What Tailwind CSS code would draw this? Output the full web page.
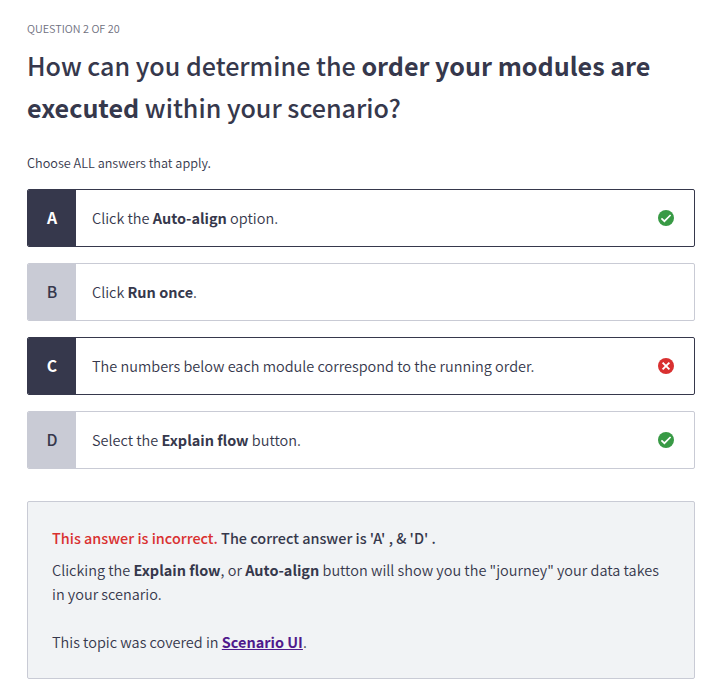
<!DOCTYPE html>
<html lang="en">
<head>
<meta charset="utf-8">
<title>Quiz</title>
<script src="https://cdn.jsdelivr.net/npm/@tailwindcss/browser@4"></script>
</head>
<body class="bg-white font-['Source_Sans_Pro','Noto_Sans_CJK_SC',sans-serif] font-[350] text-[#36384c]">
<main class="pl-[27px] pr-[19px] pt-[19px]">
  <p class="h-5 leading-[18px] text-[10.85px] text-[#6f7080] whitespace-nowrap"><span>QUESTION 2 OF 20</span></p>
  <h1 class="mt-[5px] text-[25.1px] leading-[42px] font-medium whitespace-nowrap"><span>How can you determine the </span><b class="font-bold">order your modules are</b><br><b class="font-bold">executed</b><span> within your scenario?</span></h1>
  <p class="mt-[25px] h-5 leading-5 text-[12.68px] whitespace-nowrap"><span>Choose ALL answers that apply.</span></p>
  <ul class="mt-4 flex flex-col gap-4 text-[14.47px]">
    <li class="flex h-[58px] rounded-[2px] border border-[#36384c] overflow-hidden">
      <span class="w-12 flex items-center justify-center bg-[#36384c] text-white text-[15.8px] font-bold">A</span>
      <p class="flex-1 pl-4 leading-[56px]"><span>Click the <b class="font-bold">Auto-align</b> option.</span></p>
      <svg class="self-center mr-5" width="16" height="16" viewBox="0 0 16 16"><circle cx="8" cy="8" r="8" fill="#389a45"/><path d="M3.4 8.3 6.4 11.2 12.6 5" fill="none" stroke="#fff" stroke-width="1.7"/></svg>
    </li>
    <li class="flex h-[58px] rounded-[2px] border border-[#c9cbd5] overflow-hidden">
      <span class="w-12 flex items-center justify-center bg-[#c9cbd5] text-[15.8px] font-medium">B</span>
      <p class="flex-1 pl-4 leading-[56px]"><span>Click <b class="font-bold">Run once</b>.</span></p>
    </li>
    <li class="flex h-[58px] rounded-[2px] border border-[#36384c] overflow-hidden">
      <span class="w-12 flex items-center justify-center bg-[#36384c] text-white text-[15.8px] font-bold">C</span>
      <p class="flex-1 pl-4 leading-[56px]"><span>The numbers below each module correspond to the running order.</span></p>
      <svg class="self-center mr-5" width="16" height="16" viewBox="0 0 16 16"><circle cx="8" cy="8" r="8" fill="#d93030"/><path d="M4.6 4.6 11.4 11.4M11.4 4.6 4.6 11.4" fill="none" stroke="#fff" stroke-width="1.9"/></svg>
    </li>
    <li class="flex h-[58px] rounded-[2px] border border-[#c9cbd5] overflow-hidden">
      <span class="w-12 flex items-center justify-center bg-[#c9cbd5] text-[15.8px] font-medium">D</span>
      <p class="flex-1 pl-4 leading-[56px]"><span>Select the <b class="font-bold">Explain flow</b> button.</span></p>
      <svg class="self-center mr-5" width="16" height="16" viewBox="0 0 16 16"><circle cx="8" cy="8" r="8" fill="#389a45"/><path d="M3.4 8.3 6.4 11.2 12.6 5" fill="none" stroke="#fff" stroke-width="1.7"/></svg>
    </li>
  </ul>
  <section class="mt-8 h-[178px] rounded-[2px] border border-[#c9cbd5] bg-[#f1f3f5] pl-6 pt-6 text-[14.47px] leading-6 whitespace-nowrap">
    <p class="font-medium text-[14.41px]"><span class="text-[#d93030]">This answer is incorrect.</span> <span>The correct answer is 'A' , &amp; 'D' .</span></p>
    <p class="mt-2"><span>Clicking the <b class="font-bold">Explain flow</b>, or <b class="font-bold">Auto-align</b> button will show you the "journey" your data takes</span><br><span>in your scenario.</span></p>
    <p class="mt-6"><span>This topic was covered in <a class="font-bold text-[#4f1a8c] underline">Scenario UI</a>.</span></p>
  </section>
</main>
</body>
</html>
